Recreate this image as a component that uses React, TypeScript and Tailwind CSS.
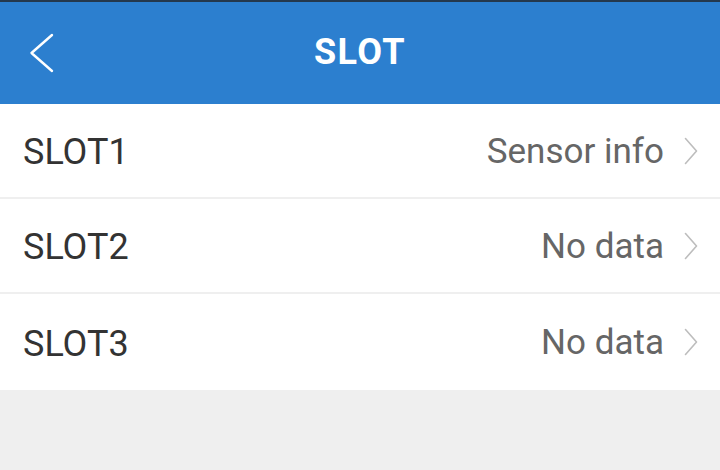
import React from 'react';

const slots = [
    { name: 'SLOT1', value: 'Sensor info' },
    { name: 'SLOT2', value: 'No data' },
    { name: 'SLOT3', value: 'No data' },
];

function Chevron({ className }: { className?: string }) {
    return (
        <svg viewBox="0 0 14 28" className={className} fill="none" stroke="currentColor" strokeWidth="1.6" strokeLinecap="round" strokeLinejoin="round">
            <path d="M1.5 1.5 L12.5 14 L1.5 26.5" />
        </svg>
    );
}

export default function App() {
    return (
        <div className="w-[720px] h-[470px] bg-[#efefef] flex flex-col" style={{ fontFamily: 'Roboto, "Noto Sans", sans-serif' }}>
            <header className="h-[104px] bg-[#2c7fcf] border-t-2 border-[#24384d] relative flex items-center justify-center">
                <button className="absolute left-[29px] top-[30px] w-[26px] h-[42px] text-white">
                    <svg viewBox="0 0 26 42" className="w-[26px] h-[42px]" fill="none" stroke="currentColor" strokeWidth="2.4" strokeLinecap="round" strokeLinejoin="round">
                        <path d="M23 3 L2.5 21 L23 39" />
                    </svg>
                </button>
                <h1 className="text-white text-[36px] font-bold tracking-[0.04em] mt-[-2px]">SLOT</h1>
            </header>
            <div className="flex flex-col bg-white">
                {slots.map((slot, i) => (
                    <div
                        key={slot.name}
                        className={`flex flex-row items-center justify-between pl-[23px] pr-[22px] pt-[3px] ${i < slots.length - 1 ? 'h-[95px] border-b-2 border-[#efefef]' : 'h-[96px]'}`}
                    >
                        <p className="text-[36px] text-[#333333]">{slot.name}</p>
                        <div className="flex flex-row items-center">
                            <p className="text-[35px] text-[#666666]">{slot.value}</p>
                            <Chevron className="w-[14px] h-[28px] ml-[20px] mt-[-3px] text-[#bdbdbd]" />
                        </div>
                    </div>
                ))}
            </div>
        </div>
    );
}
